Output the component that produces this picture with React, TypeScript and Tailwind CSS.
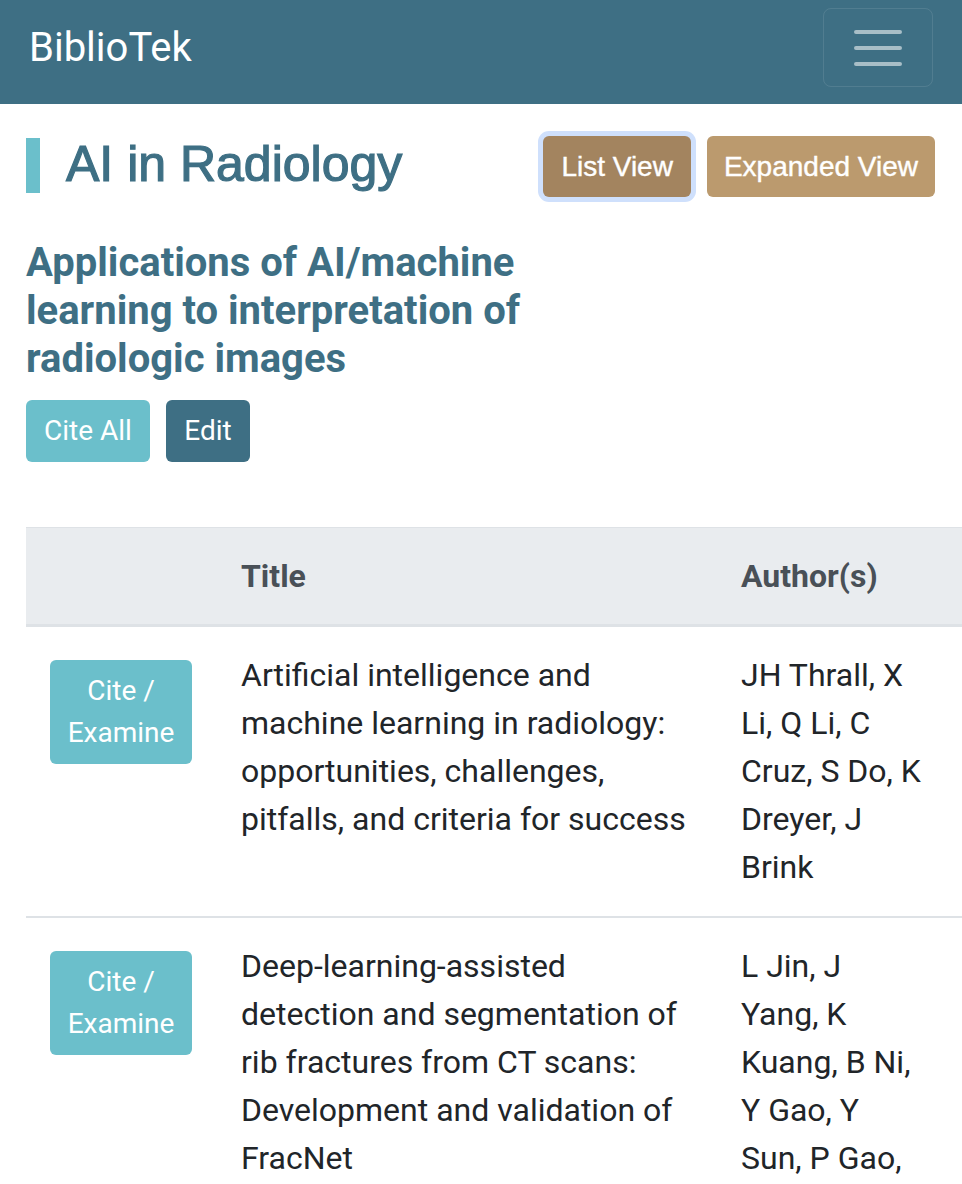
import React from "react";

const rows = [
  {
    title: "Artificial intelligence and machine learning in radiology: opportunities, challenges, pitfalls, and criteria for success",
    authors: "JH Thrall, X Li, Q Li, C Cruz, S Do, K Dreyer, J Brink",
  },
  {
    title: "Deep-learning-assisted detection and segmentation of rib fractures from CT scans: Development and validation of FracNet",
    authors: "L Jin, J Yang, K Kuang, B Ni, Y Gao, Y Sun, P Gao, W Ma, M Tan, H Kang, J Chen, M Li",
  },
];

export default function App() {
  return (
    <div className="w-[962px] min-h-[1184px] overflow-hidden bg-white text-[#212529] font-['Roboto',sans-serif]">
      <nav className="h-[104px] bg-[#3e6f84] pl-[29px] pr-[29px] pt-[8px] flex items-start justify-between">
        <span className="text-white text-[40px] leading-[79px] h-[79px]">BiblioTek</span>
        <button className="w-[110px] h-[79px] rounded-[8px] border border-white/10 flex items-center justify-center">
          <svg width="50" height="40" viewBox="0 0 50 40">
            <path d="M3 4H47M3 20H47M3 36H47" stroke="rgba(255,255,255,0.55)" strokeWidth="4" strokeLinecap="round" />
          </svg>
        </button>
      </nav>

      <div className="pl-[26px] pr-[27px]">
        <div className="mt-[32px] flex items-start justify-between">
          <div className="flex items-center">
            <div className="w-[14px] h-[55px] bg-[#6bbfcb]" />
            <h1 className="ml-[26px] text-[50px] leading-[60px] font-['Liberation_Sans',Arial,sans-serif] text-[#3e6f84] [-webkit-text-stroke:1.2px_#3e6f84] -mt-[2px]">
              AI in Radiology
            </h1>
          </div>
          <div className="flex gap-[16px] font-['Liberation_Sans',Arial,sans-serif] text-[28px]">
            <button className="h-[61px] px-[18px] rounded-[6px] bg-[#a3845f] text-white [-webkit-text-stroke:0.4px_white] ring-[5px] ring-[#cfe0fc]">
              List View
            </button>
            <button className="h-[61px] px-[17px] rounded-[6px] bg-[#bb9a6e] text-white [-webkit-text-stroke:0.4px_white]">
              Expanded View
            </button>
          </div>
        </div>

        <h2 className="mt-[42px] w-[500px] text-[40px] leading-[48px] font-bold text-[#3e6f84]">
          Applications of AI/machine learning to interpretation of radiologic images
        </h2>

        <div className="mt-[17px] flex gap-[16px] text-[28px]">
          <button className="h-[62px] w-[124px] rounded-[6px] bg-[#6bbfcb] text-white">Cite All</button>
          <button className="h-[62px] w-[84px] rounded-[6px] bg-[#3e6f84] text-white">Edit</button>
        </div>
      </div>

      <div className="mt-[65px] ml-[26px] overflow-hidden">
        <table className="table-fixed border-collapse w-[1130px] text-[32px] leading-[48px]">
          <colgroup>
            <col className="w-[191px]" />
            <col className="w-[500px]" />
            <col className="w-[232px]" />
            <col className="w-[207px]" />
          </colgroup>
          <thead>
            <tr className="bg-[#e9ecef] text-[#495057]">
              <th className="border-t border-[#dee2e6] border-b-[3px] border-b-[#dee2e6] pt-[24px] pb-[24px] px-[24px] text-left font-bold"></th>
              <th className="border-t border-[#dee2e6] border-b-[3px] border-b-[#dee2e6] pt-[24px] pb-[24px] px-[24px] text-left font-bold">Title</th>
              <th className="border-t border-[#dee2e6] border-b-[3px] border-b-[#dee2e6] pt-[24px] pb-[24px] px-[24px] text-left font-bold">Author(s)</th>
              <th className="border-t border-[#dee2e6] border-b-[3px] border-b-[#dee2e6] pt-[24px] pb-[24px] px-[24px] text-left font-bold"></th>
            </tr>
          </thead>
          <tbody>
            {rows.map((r, i) => (
              <tr key={i} className="border-b-2 border-[#dee2e6] align-top">
                <td className="pt-[24px] pb-[25px] px-[24px]">
                  <button className="mt-[9px] w-[142px] py-[10px] rounded-[6px] bg-[#6bbfcb] text-white text-[28px] leading-[42px] text-center">
                    Cite / Examine
                  </button>
                </td>
                <td className="pt-[24px] pb-[25px] px-[24px]">{r.title}</td>
                <td className="pt-[24px] pb-[25px] px-[24px]">{r.authors}</td>
                <td className="pt-[24px] pb-[25px] px-[24px]"></td>
              </tr>
            ))}
          </tbody>
        </table>
      </div>
    </div>
  );
}
